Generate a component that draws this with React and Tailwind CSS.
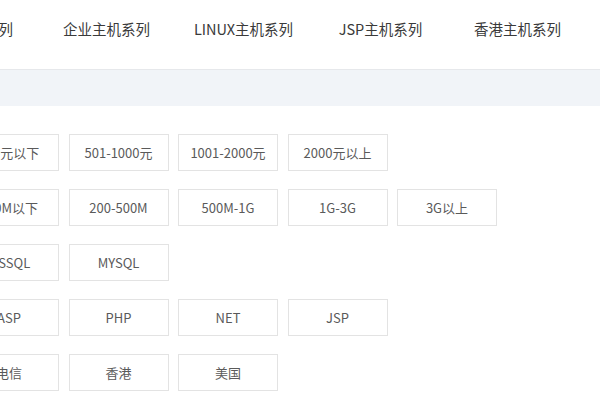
export default function App() {
  const nav = ["经济主机系列", "企业主机系列", "LINUX主机系列", "JSP主机系列", "香港主机系列"];
  const rows = [
    ["500元以下", "501-1000元", "1001-2000元", "2000元以上"],
    ["200M以下", "200-500M", "500M-1G", "1G-3G", "3G以上"],
    ["MSSQL", "MYSQL"],
    ["ASP", "PHP", "NET", "JSP"],
    ["电信", "香港", "美国"],
  ];
  return (
    <div className="w-[600px] h-[400px] overflow-hidden bg-white" style={{ fontFamily: '"Noto Sans CJK SC", "Noto Sans", sans-serif' }}>
      <div className="h-[70px] border-b border-[#e6e8eb] flex items-center">
        <div className="flex ml-[-99px] shrink-0">
          {nav.map((t) => (
            <div key={t} className="w-[137px] shrink-0 text-center text-[14.5px] text-[#3a3a3a] pb-[11px]">{t}</div>
          ))}
        </div>
      </div>
      <div className="h-[36px] bg-[#f1f4f8]"></div>
      <div className="pt-[28px] flex flex-col gap-[18px]">
        {rows.map((r, i) => (
          <div key={i} className="flex gap-[9.5px] ml-[-41px]">
            {r.map((t) => (
              <div key={t} className="w-[100px] h-[37px] shrink-0 border border-[#e3e3e3] flex items-center justify-center text-[13px] text-[#5a5a5a]">{t}</div>
            ))}
          </div>
        ))}
      </div>
    </div>
  );
}
